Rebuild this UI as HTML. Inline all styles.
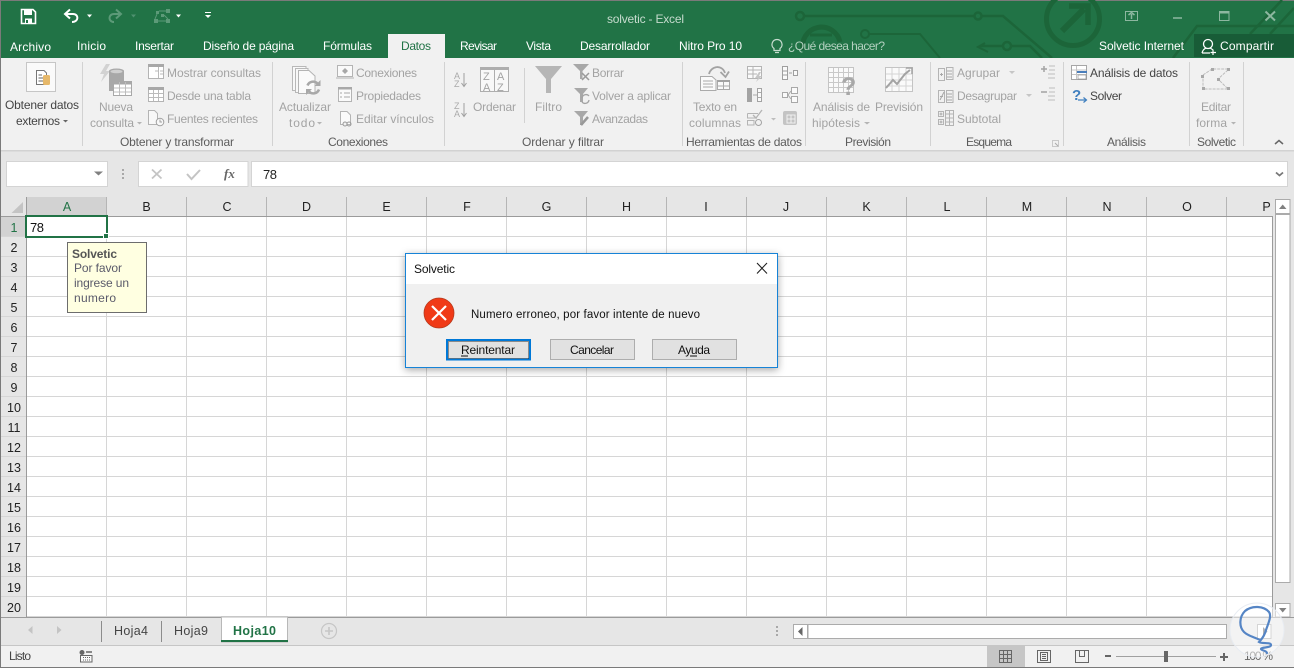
<!DOCTYPE html>
<html><head><meta charset="utf-8"><title>solvetic - Excel</title>
<style>
html,body{margin:0;padding:0;background:#fff;overflow:hidden}
svg{display:block}
text{font-family:"Liberation Sans",Arial,sans-serif;font-size:12px}
.w{fill:#fff}.g{fill:#a3a3a3}.k{fill:#444}.l{fill:#5c5c5c}.n{fill:#222;font-size:12.5px;text-anchor:middle}
.s{fill:none;stroke:#b4b4b4;stroke-width:1}.f{fill:#b4b4b4}
</style></head><body>
<svg width="1294" height="668" viewBox="0 0 1294 668" xmlns="http://www.w3.org/2000/svg">
<defs>
<pattern id="gr" x="27" y="217" width="80" height="20" patternUnits="userSpaceOnUse"><rect x="79" y="0" width="1" height="20" fill="#d6d6d6"/><rect x="0" y="19" width="80" height="1" fill="#d6d6d6"/></pattern>
<pattern id="hd" x="27" y="197" width="80" height="20" patternUnits="userSpaceOnUse"><rect x="79" y="0" width="1" height="20" fill="#b5b5b5"/></pattern>
<filter id="sh" x="-10%" y="-20%" width="120%" height="140%"><feDropShadow dx="0" dy="2" stdDeviation="4" flood-color="#000" flood-opacity=".35"/></filter>
</defs>

<!-- base -->
<rect width="1294" height="668" fill="#e6e6e6"/>
<rect x="0" y="0" width="1294" height="58" fill="#217346"/>
<rect x="0" y="0" width="1294" height="1" fill="#7a7a7a"/>
<rect x="0" y="0" width="1" height="668" fill="#7a7a7a"/>

<!-- circuit background -->
<g fill="none" stroke="#1c6539" stroke-width="2.5">
<circle cx="1073" cy="19" r="26.5" stroke-width="5"/>
<path d="M1062 31L1084 9" stroke-width="6"/><path d="M1069 6H1088V25" stroke-width="5.500"/>
<path d="M804 16H974M982 16H1003L1052 58"/>
<circle cx="800" cy="16" r="4"/><circle cx="978" cy="16" r="3.500"/><circle cx="865" cy="34" r="4" stroke-width="2"/>
<path d="M869 34H920L940 58" stroke-width="2"/>
<path d="M803 50A18 18 0 0 1 840 42" stroke-width="5"/><path d="M810 35H832" stroke-width="3"/>
<path d="M980 46H1003M1011 46H1030L1042 58"/><circle cx="1007" cy="46" r="4"/>
<path d="M985 43L978 47L988 52" stroke-width="2"/>
<path d="M1173 58L1197 26H1294" stroke-width="2.500"/>
<path d="M1250 34L1282 0M1270 34L1294 8" stroke-width="2.500"/>
</g>

<!-- QAT -->
<g>
<path d="M21.500 9.500H33L35.500 12V23.500H21.500Z" fill="none" stroke="#fff" stroke-width="1.600"/>
<rect x="24" y="10" width="8" height="5" fill="#fff"/><rect x="25" y="18.500" width="7" height="5" fill="#fff"/><rect x="26" y="20" width="2" height="3" fill="#217346"/>
<path d="M66 14H73C79 14 79 22 72 22" fill="none" stroke="#fff" stroke-width="2"/><path d="M70 9.500L65 14L70 18.500" fill="none" stroke="#fff" stroke-width="2"/>
<path d="M87 14.500H92L89.500 17.500Z" fill="#fff"/>
<path d="M120 14H114C108 14 108 22 114 22" fill="none" stroke="#5c9a78" stroke-width="2"/><path d="M116 9.500L121 14L116 18.500" fill="none" stroke="#5c9a78" stroke-width="2"/>
<path d="M131 14.500H136L133.500 17.500Z" fill="#4f9170"/>
<g fill="#5c9a78"><rect x="154" y="19" width="4" height="4"/><rect x="166" y="19" width="4" height="4"/><rect x="156" y="11" width="3" height="3"/><rect x="166" y="9" width="4" height="4"/><rect x="161" y="14" width="3" height="3"/></g>
<path d="M157 14L155 19M159 11H166M164 15L168 19M158 21H166" stroke="#5c9a78" fill="none"/>
<path d="M176 14.500H181L178.500 17.500Z" fill="#fff"/>
<rect x="205" y="12" width="6" height="1" fill="#fff"/><path d="M205 15H211L208 18Z" fill="#fff"/>
</g>
<text x="607" y="23" textLength="77" style="fill:#c6dbce">solvetic - Excel</text>
<!-- window buttons -->
<g fill="none" stroke="#8db7a0">
<rect x="1125.500" y="11.500" width="12" height="9"/><path d="M1131.500 19V14M1128.500 15L1131.500 12.500L1134.500 15" stroke-width="1.500"/>
<path d="M1173 18H1182" stroke-width="1.500"/>
<rect x="1219.500" y="11.500" width="9.500" height="9"/><path d="M1219.500 12.500H1229" stroke-width="2"/>
<path d="M1265.500 11.500L1275 20.500M1275 11.500L1265.500 20.500" stroke-width="2"/>
</g>

<!-- tabs -->
<rect x="388" y="34" width="57" height="25" fill="#f1f1f1"/>
<rect x="1194" y="34" width="100" height="23" fill="#185c37"/>
<text class="w" x="10" y="51" textLength="41">Archivo</text>
<text class="w" x="77" y="50" textLength="29">Inicio</text>
<text class="w" x="135" y="50" textLength="39">Insertar</text>
<text class="w" x="203" y="50" textLength="91">Diseño de página</text>
<text class="w" x="323" y="50" textLength="49">Fórmulas</text>
<text x="401" y="50" textLength="30" fill="#217346">Datos</text>
<text class="w" x="460" y="50" textLength="37">Revisar</text>
<text class="w" x="526" y="50" textLength="25">Vista</text>
<text class="w" x="580" y="50" textLength="70">Desarrollador</text>
<text class="w" x="679" y="50" textLength="63">Nitro Pro 10</text>
<path d="M777 40a5 5 0 0 1 3 9v2h-6v-2a5 5 0 0 1 3-9ZM775 53h4" fill="none" stroke="#c7dccf" stroke-width="1.200" transform="translate(0,-0.500)"/>
<text x="788" y="50" textLength="97" fill="#b3d0bf">¿Qué desea hacer?</text>
<text class="w" x="1099" y="50" textLength="85">Solvetic Internet</text>
<circle cx="1208" cy="44" r="4.500" fill="none" stroke="#fff" stroke-width="1.300"/>
<path d="M1202 53C1203 49 1205 48.500 1206 48M1210 48C1211 48.500 1212 49 1213 50M1202 53H1210M1213 49.500V55M1210.500 52.500H1216" fill="none" stroke="#fff" stroke-width="1.200"/>
<text class="w" x="1220" y="50" textLength="54">Compartir</text>

<!-- ribbon -->
<rect x="1" y="58" width="1293" height="92" fill="#f1f1f1"/>
<rect x="388" y="57" width="57" height="2" fill="#f1f1f1"/>
<rect x="1" y="150" width="1293" height="1.500" fill="#d2d2d2"/>
<g fill="#d2d2d2">
<rect x="82" y="62" width="1" height="84"/><rect x="272" y="62" width="1" height="84"/><rect x="444" y="62" width="1" height="84"/><rect x="524" y="68" width="1" height="55"/><rect x="682" y="62" width="1" height="84"/><rect x="805" y="62" width="1" height="84"/><rect x="930" y="62" width="1" height="84"/><rect x="1063" y="62" width="1" height="84"/><rect x="1189" y="62" width="1" height="84"/><rect x="1243" y="62" width="1" height="84"/>
</g>

<!-- Obtener datos -->
<rect x="26.500" y="62.500" width="29" height="29" fill="#fafafa" stroke="#c6c6c6"/>
<path d="M36.500 70.500H44L46.500 73V84.500H36.500Z" fill="#fff" stroke="#777"/>
<path d="M38.500 75H42M38.500 78H43M38.500 81H43" stroke="#666"/>
<rect x="43" y="75" width="7" height="10" rx="1.500" fill="#e6b86a"/>
<text class="k" x="5" y="109" textLength="74">Obtener datos</text>
<text class="k" x="16" y="125" textLength="44">externos</text>
<path d="M63 120H68L65.500 122.500Z" fill="#666"/>

<!-- Nueva consulta -->
<path d="M106 64L100 74H104L101 82L110 71H106L110 64Z" fill="#d2d2d2"/>
<ellipse cx="116.500" cy="71" rx="7.500" ry="2.500" fill="#a8a8a8"/><rect x="109" y="71" width="15" height="20" fill="#a8a8a8"/><ellipse cx="116.500" cy="71.500" rx="6" ry="1.800" fill="#d0d0d0"/>
<rect x="113.500" y="81.500" width="18" height="14" fill="#fff" stroke="#a8a8a8"/><rect x="113.500" y="81.500" width="18" height="3" fill="#a8a8a8"/>
<path d="M119.500 82V95M125.500 82V95M114 88H131M114 92H131" stroke="#bdbdbd"/>
<text class="g" x="99" y="111" textLength="34">Nueva</text>
<text class="g" x="90" y="127" textLength="44">consulta</text>
<path d="M137 122H142L139.500 124.500Z" class="f"/>

<!-- Mostrar etc -->
<rect x="148.500" y="64.500" width="15" height="14" fill="#fff" stroke="#b4b4b4"/><rect x="148" y="64" width="16" height="3" fill="#a8a8a8"/><path d="M158.500 67V78M155 71H158M160 71H163M160 74H163" stroke="#bbb"/>
<text class="g" x="167" y="77" textLength="94">Mostrar consultas</text>
<rect x="148.500" y="87.500" width="15" height="14" fill="#fff" stroke="#b4b4b4"/><rect x="148" y="87" width="16" height="3" fill="#a8a8a8"/><path d="M153.500 90V101M158.500 90V101M149 93.500H163M149 97.500H163" stroke="#bbb"/>
<text class="g" x="167" y="100" textLength="84">Desde una tabla</text>
<path d="M148.500 110.500H154.500L157.500 113.500V124.500H148.500Z" fill="#f8f8f8" stroke="#b4b4b4"/><circle cx="160" cy="122" r="3.800" fill="#f8f8f8" stroke="#a0a0a0"/><path d="M160 119.500V122H162" stroke="#a0a0a0" fill="none"/>
<text class="g" x="167" y="123" textLength="91">Fuentes recientes</text>

<!-- Actualizar -->
<path d="M292.500 66.500H306V90.500H292.500Z" fill="#f8f8f8" stroke="#b8b8b8"/>
<path d="M295.500 68.500H308V92.500H295.500Z" fill="#f8f8f8" stroke="#b8b8b8"/>
<path d="M298.500 70.500H309L315 76V93.500H298.500Z" fill="#fafafa" stroke="#b4b4b4"/>
<path d="M307.500 85.500A6 6 0 0 1 317.500 83.500" fill="none" stroke="#a8a8a8" stroke-width="2.500"/>
<path d="M319 89.500A6 6 0 0 1 309 91.500" fill="none" stroke="#a8a8a8" stroke-width="2.500"/>
<path d="M320.500 80V86H314.500Z" fill="#a8a8a8"/><path d="M306 95V89H312Z" fill="#a8a8a8"/>
<text class="g" x="279" y="111" textLength="52">Actualizar</text>
<text class="g" x="289" y="127" textLength="26">todo</text>
<path d="M317 122H322L319.500 124.500Z" class="f"/>
<rect x="337.500" y="65.500" width="15" height="11" fill="#fafafa" stroke="#b4b4b4"/><path d="M345 68L348 71L345 74L342 71Z" fill="#a8a8a8"/><path d="M336 78H354" stroke="#b4b4b4"/>
<text class="g" x="356" y="77" textLength="61">Conexiones</text>
<rect x="338.500" y="87.500" width="13" height="14" fill="#fafafa" stroke="#b4b4b4"/><rect x="338" y="87" width="14" height="2.500" fill="#a8a8a8"/><path d="M340 93H342M344 93H350M340 97H342M344 97H350" stroke="#a8a8a8"/>
<text class="g" x="356" y="100" textLength="65">Propiedades</text>
<path d="M340.500 111.500H347L350.500 115V124.500H340.500Z" fill="#fafafa" stroke="#b4b4b4"/><circle cx="345" cy="124" r="2" fill="#f1f1f1" stroke="#999"/><circle cx="349" cy="124" r="2" fill="none" stroke="#999"/>
<text class="g" x="356" y="123" textLength="78">Editar vínculos</text>
<text class="l" x="120" y="146" textLength="114">Obtener y transformar</text>
<text class="l" x="328" y="146" textLength="60">Conexiones</text>

<!-- sort -->
<text x="454" y="79" style="font-size:9px;fill:#aaa">A</text><text x="454" y="87" style="font-size:9px;fill:#aaa">Z</text>
<path d="M464 73V86M461.500 83L464 86.500L466.500 83" fill="none" stroke="#a0a0a0"/>
<text x="454" y="109" style="font-size:9px;fill:#aaa">Z</text><text x="454" y="117" style="font-size:9px;fill:#aaa">A</text>
<path d="M464 103V116M461.500 113L464 116.500L466.500 113" fill="none" stroke="#a0a0a0"/>
<rect x="480.500" y="67.500" width="28" height="24" fill="#f8f8f8" stroke="#aeaeae"/><rect x="480" y="67" width="29" height="3" fill="#aeaeae"/><path d="M494.500 70V91" stroke="#aeaeae"/>
<text x="483" y="80" style="font-size:11px;fill:#a3a3a3">Z</text><text x="497" y="80" style="font-size:11px;fill:#a3a3a3">A</text><text x="483" y="91" style="font-size:11px;fill:#a3a3a3">A</text><text x="497" y="91" style="font-size:11px;fill:#a3a3a3">Z</text>
<text class="g" x="473" y="111" textLength="43">Ordenar</text>

<!-- filter -->
<path d="M535 66H562L551 79V93H546V79Z" fill="#b6b6b6"/>
<text class="g" x="535" y="111" textLength="27">Filtro</text>
<path d="M573 64H589L582.500 71V79H580V71Z" fill="#a8a8a8"/><path d="M582 73L589 80M589 73L582 80" stroke="#9a9a9a" stroke-width="1.500"/>
<text class="g" x="592" y="77" textLength="32">Borrar</text>
<path d="M574 88H588L583 94V102H580V94Z" fill="#a8a8a8"/><path d="M582 98A4 4 0 0 1 589 96M589 100A4 4 0 0 1 582 102" fill="none" stroke="#a3a3a3" stroke-width="1.300"/>
<text class="g" x="592" y="100" textLength="79">Volver a aplicar</text>
<path d="M574 111H588L583 117V125H580V117Z" fill="#a8a8a8"/><path d="M581 125L588 117" stroke="#999" stroke-width="2.500"/>
<text class="g" x="592" y="123" textLength="56">Avanzadas</text>
<text class="l" x="522" y="146" textLength="82">Ordenar y filtrar</text>

<!-- texto en columnas -->
<path d="M700.500 76.500H712L716 80V90.500H700.500Z" fill="#fafafa" stroke="#aaa"/><path d="M703 81H713M703 84H713M703 87H713" stroke="#aaa"/>
<rect x="717.500" y="80.500" width="12" height="9" fill="#fafafa" stroke="#aaa"/><rect x="717" y="80" width="13" height="2" fill="#a3a3a3"/><path d="M723.500 82V90M718 86H729" stroke="#aaa"/>
<path d="M709 74C711 66 722 64 725 73" fill="none" stroke="#a3a3a3" stroke-width="1.800"/><path d="M720.500 72L725.500 77L729 71.500" fill="none" stroke="#a3a3a3" stroke-width="1.800"/>
<text class="g" x="693" y="111" textLength="44">Texto en</text>
<text class="g" x="689" y="127" textLength="52">columnas</text>
<rect x="747.500" y="66.500" width="14" height="12" fill="#fafafa" stroke="#b4b4b4"/><path d="M748 70H761M748 74H757M753 67V78" stroke="#b4b4b4"/><path d="M759 72L755 78H758L756 82L762 76H759L761 72Z" fill="#c6c6c6"/>
<rect x="747" y="88" width="5" height="14" fill="#a3a3a3"/><rect x="757.500" y="88.500" width="4" height="13" fill="#fafafa" stroke="#a3a3a3"/><path d="M753 95H757" stroke="#aaa"/><path d="M757.500 92.500H761M757.500 97.500H761" stroke="#aaa"/>
<path d="M747.500 113.500H758M747.500 113.500V118H757M747.500 120.500H754V125H747.500Z" fill="none" stroke="#b4b4b4"/><path d="M753 115L756 118L762 110" fill="none" stroke="#b4b4b4" stroke-width="1.300"/><circle cx="758.500" cy="122.500" r="3" fill="none" stroke="#a3a3a3"/>
<path d="M771 118H776L773.500 120.500Z" fill="#bdbdbd"/>
<rect x="782.500" y="66.500" width="5" height="13" fill="#fafafa" stroke="#9f9f9f"/><path d="M783 71H787M783 75H787M789 73H792" stroke="#9f9f9f"/><rect x="793.500" y="70.500" width="4" height="5" fill="#fafafa" stroke="#9f9f9f"/>
<rect x="782.500" y="92.500" width="5" height="5" fill="#fafafa" stroke="#a8a8a8"/><rect x="791.500" y="87.500" width="6" height="6" fill="#fafafa" stroke="#a8a8a8"/><rect x="791.500" y="96.500" width="6" height="6" fill="#fafafa" stroke="#a8a8a8"/><path d="M788 95L791 91M788 95L791 99" stroke="#a8a8a8"/>
<rect x="783" y="111" width="14" height="14" rx="2" fill="#c4c4c4"/><path d="M787 115H795V123H787ZM791 115V123M787 119H795" fill="none" stroke="#f1f1f1"/>
<text class="l" x="686" y="146" textLength="116">Herramientas de datos</text>

<!-- analisis hipotesis -->
<rect x="828.500" y="67.500" width="25" height="25" fill="#fafafa" stroke="#c4c4c4"/><path d="M833.500 68V92M838.500 68V92M843.500 68V92M848.500 68V92M829 72.500H853M829 77.500H853M829 82.500H853M829 87.500H853" stroke="#c9c9c9"/>
<text x="841" y="95" style="font-size:25px;font-weight:bold;fill:#a8a8a8">?</text>
<text class="g" x="813" y="111" textLength="57">Análisis de</text>
<text class="g" x="812" y="127" textLength="48">hipótesis</text>
<path d="M864 122H870L867 124.500Z" class="f"/>
<rect x="885.500" y="67.500" width="27" height="24" fill="#fafafa" stroke="#c4c4c4"/><path d="M892 68V91M899 68V91M906 68V91M886 74H912M886 80H912M886 86H912" stroke="#d4d4d4"/>
<path d="M886 88L893 80L897 84L905 74L910 70" fill="none" stroke="#a3a3a3" stroke-width="2"/><path d="M906 68H912V74" fill="none" stroke="#a3a3a3" stroke-width="1.500"/>
<text class="g" x="875" y="111" textLength="48">Previsión</text>
<text class="l" x="845" y="146" textLength="46">Previsión</text>

<!-- esquema -->
<rect x="938.500" y="68.500" width="6" height="12" class="s"/><rect x="946.500" y="67.500" width="6.500" height="12" class="s"/><path d="M940 74.500H943M941.500 73V76M947 71H952M947 74H952M947 77H952" stroke="#a8a8a8"/>
<text class="g" x="957" y="77" textLength="43">Agrupar</text><path d="M1009 71H1015L1012 74Z" fill="#c6c6c6"/>
<rect x="938.500" y="90.500" width="6" height="12" class="s"/><rect x="946.500" y="90.500" width="6.500" height="12" class="s"/><path d="M940 96.500H943M947 94H952M947 97H952M947 100H952M940 100L944 92" stroke="#a8a8a8"/>
<text class="g" x="957" y="100" textLength="60">Desagrupar</text><path d="M1026 94H1032L1029 97Z" fill="#c6c6c6"/>
<rect x="938.500" y="111.500" width="5" height="5" class="s"/><rect x="938.500" y="119.500" width="5" height="5" class="s"/><rect x="945.500" y="110.500" width="8" height="15" class="s"/><path d="M949.500 111V125M946 114H953M946 118H953M946 122H953" stroke="#b4b4b4"/><path d="M939.500 114H942.500M941 112.500V115.500M939.500 122H942.500M941 120.500V123.500" stroke="#a8a8a8"/>
<text class="g" x="957" y="123" textLength="44">Subtotal</text>
<path d="M1041 69H1047M1044 66V72" stroke="#a3a3a3" stroke-width="1.500"/><path d="M1049 66H1055M1049 70H1055M1048 74H1055M1048 78H1055" stroke="#bdbdbd"/>
<path d="M1041 92H1047" stroke="#a3a3a3" stroke-width="1.500"/><path d="M1049 88H1055M1049 92H1055M1048 96H1055M1048 100H1055" stroke="#bdbdbd"/>
<text class="l" x="966" y="146" textLength="46">Esquema</text>
<path d="M1052.500 140.500H1058.500V146.500H1052.500Z" fill="none" stroke="#c8c8c8"/><path d="M1055 143L1058 146" stroke="#aaa"/>

<!-- analisis -->
<rect x="1071.500" y="65.500" width="15" height="14" fill="#fff" stroke="#a6a6a6"/><path d="M1076.500 66V79M1072 70H1086M1072 74.500H1086" stroke="#c4c4c4"/><rect x="1077" y="71" width="10" height="2" fill="#4a7ebb"/><rect x="1078" y="75" width="8" height="4" fill="#fff" stroke="#888" stroke-width=".6"/>
<text class="k" x="1090" y="77" textLength="88">Análisis de datos</text>
<text x="1072" y="100" style="font-size:15px;font-weight:bold;fill:#3f7fbf">?</text>
<path d="M1078 100H1086M1083.500 97.500L1086.500 100L1083.500 102.500" fill="none" stroke="#3f7fbf" stroke-width="1.200"/>
<text class="k" x="1090" y="100" textLength="32">Solver</text>
<text class="l" x="1107" y="146" textLength="39">Análisis</text>

<!-- editar forma -->
<path d="M1203 75L1212 69H1228M1228 70L1218 79L1228 89H1203V76" fill="none" stroke="#bdbdbd" stroke-dasharray="3 1"/>
<g fill="#a8a8a8"><rect x="1201" y="75" width="3" height="3"/><rect x="1211" y="68" width="3" height="3"/><rect x="1227" y="68" width="3" height="3"/><rect x="1217" y="78" width="3" height="3"/><rect x="1227" y="87" width="3" height="3"/><rect x="1202" y="87" width="3" height="3"/></g>
<text class="g" x="1201" y="111" textLength="30">Editar</text>
<text class="g" x="1196" y="127" textLength="31">forma</text>
<path d="M1231 122H1236L1233.500 124.500Z" class="f"/>
<text class="l" x="1197" y="146" textLength="39">Solvetic</text>
<path d="M1275 144L1279 140.500L1283 144" fill="none" stroke="#666" stroke-width="1.500"/>

<!-- formula bar -->
<rect x="6.500" y="161.500" width="101" height="25" fill="#fff" stroke="#d4d4d4"/>
<path d="M94 171.500H103L98.500 175.500Z" fill="#808080"/>
<g fill="#a8a8a8"><rect x="122" y="169" width="2" height="2"/><rect x="122" y="173" width="2" height="2"/><rect x="122" y="177" width="2" height="2"/></g>
<rect x="138.500" y="161.500" width="109.500" height="25" fill="#fff" stroke="#d4d4d4"/>
<path d="M152 169.500L161.500 178.500M161.500 169.500L152 178.500" stroke="#c4c4c4" stroke-width="1.800"/>
<path d="M187 174L191.500 179L200 170" fill="none" stroke="#c4c4c4" stroke-width="2"/>
<text x="224" y="178" style="font-family:'Liberation Serif',serif;font-style:italic;font-weight:bold;font-size:13px;fill:#666">fx</text>
<rect x="251.500" y="161.500" width="1036" height="25" fill="#fff" stroke="#d4d4d4"/>
<text x="263" y="179" textLength="14" style="font-size:13px;fill:#222">78</text>
<path d="M1276 172.500L1279.500 175.500L1283 172.500" fill="none" stroke="#777" stroke-width="1.800"/>

<!-- headers -->
<rect x="1" y="197" width="1272" height="20" fill="#e6e6e6"/>
<rect x="27" y="197" width="80" height="19" fill="#d2d2d2"/>
<rect x="27" y="197" width="1246" height="19" fill="url(#hd)"/>
<path d="M23 202V213H11.500Z" fill="#c4c4c4"/>
<rect x="1" y="216" width="1272" height="1" fill="#9b9b9b"/>
<rect x="1" y="217" width="26" height="400" fill="#e6e6e6"/>
<rect x="1" y="217" width="25" height="20" fill="#d2d2d2"/>

<!-- grid -->
<rect x="27" y="217" width="1245" height="400" fill="#fff"/>
<rect x="27" y="217" width="1245" height="400" fill="url(#gr)"/>
<rect x="26" y="197" width="1" height="420" fill="#9b9b9b"/>
<rect x="1272" y="216" width="1" height="401" fill="#9b9b9b"/>
<g fill="#d6d6d6"><rect x="1" y="236" width="25" height="1"/><rect x="1" y="256" width="25" height="1"/><rect x="1" y="276" width="25" height="1"/><rect x="1" y="296" width="25" height="1"/><rect x="1" y="316" width="25" height="1"/><rect x="1" y="336" width="25" height="1"/><rect x="1" y="356" width="25" height="1"/><rect x="1" y="376" width="25" height="1"/><rect x="1" y="396" width="25" height="1"/><rect x="1" y="416" width="25" height="1"/><rect x="1" y="436" width="25" height="1"/><rect x="1" y="456" width="25" height="1"/><rect x="1" y="476" width="25" height="1"/><rect x="1" y="496" width="25" height="1"/><rect x="1" y="516" width="25" height="1"/><rect x="1" y="536" width="25" height="1"/><rect x="1" y="556" width="25" height="1"/><rect x="1" y="576" width="25" height="1"/><rect x="1" y="596" width="25" height="1"/></g>

<text class="n" x="67" y="211" style="fill:#217346">A</text>
<text class="n" x="146.500" y="211">B</text><text class="n" x="227" y="211">C</text><text class="n" x="306.500" y="211">D</text><text class="n" x="386.500" y="211">E</text><text class="n" x="467" y="211">F</text><text class="n" x="546.500" y="211">G</text><text class="n" x="626.500" y="211">H</text><text class="n" x="706" y="211">I</text><text class="n" x="786" y="211">J</text><text class="n" x="866.500" y="211">K</text><text class="n" x="947" y="211">L</text><text class="n" x="1027" y="211">M</text><text class="n" x="1107" y="211">N</text><text class="n" x="1187" y="211">O</text><text class="n" x="1266.500" y="211">P</text>

<text class="n" x="14" y="232" style="fill:#217346">1</text>
<text class="n" x="14" y="252">2</text><text class="n" x="14" y="272">3</text><text class="n" x="14" y="292">4</text><text class="n" x="14" y="312">5</text><text class="n" x="14" y="332">6</text><text class="n" x="14" y="352">7</text><text class="n" x="14" y="372">8</text><text class="n" x="14" y="392">9</text><text class="n" x="14" y="412">10</text><text class="n" x="14" y="432">11</text><text class="n" x="14" y="452">12</text><text class="n" x="14" y="472">13</text><text class="n" x="14" y="492">14</text><text class="n" x="14" y="512">15</text><text class="n" x="14" y="532">16</text><text class="n" x="14" y="552">17</text><text class="n" x="14" y="572">18</text><text class="n" x="14" y="592">19</text><text class="n" x="14" y="612">20</text>

<!-- selected cell -->
<rect x="26" y="216" width="81" height="21" fill="#fff" stroke="#217346" stroke-width="2"/>
<rect x="103.500" y="233.500" width="5" height="5" fill="#217346" stroke="#fff"/>
<text x="30" y="232" textLength="14" style="font-size:13px;fill:#111">78</text>

<!-- comment -->
<rect x="67.500" y="242.500" width="79" height="70" fill="#ffffe1" stroke="#6d6d6d"/>
<text x="72" y="258" textLength="45" style="font-weight:bold;fill:#555">Solvetic</text>
<text x="74" y="272" textLength="48" style="fill:#5a5a6a">Por favor</text>
<text x="74" y="287" textLength="55" style="fill:#5a5a6a">ingrese un</text>
<text x="74" y="302" textLength="42" style="fill:#5a5a6a">numero</text>

<!-- vertical scroll -->
<rect x="1273" y="197" width="21" height="420" fill="#e6e6e6"/>
<rect x="1275.500" y="199.500" width="14.500" height="14" fill="#fff" stroke="#ababab"/>
<path d="M1279 209H1286.500L1282.700 204.500Z" fill="#808080"/>
<rect x="1275.500" y="214.500" width="14.500" height="368" fill="#fff" stroke="#ababab"/>
<rect x="1275.500" y="603.500" width="14.500" height="13.500" fill="#fff" stroke="#ababab"/>
<path d="M1279 608H1286.500L1282.700 612.500Z" fill="#808080"/>

<!-- tabs bar -->
<rect x="1" y="617" width="1293" height="28" fill="#e6e6e6"/>
<rect x="1" y="617" width="1293" height="1" fill="#9b9b9b"/>
<path d="M32.500 626V634L28 630Z" fill="#c4c4c4"/><path d="M57 626V634L61.500 630Z" fill="#c4c4c4"/>
<rect x="101" y="621" width="1" height="21" fill="#8c8c8c"/><rect x="161" y="621" width="1" height="21" fill="#8c8c8c"/>
<text x="114" y="635" textLength="34" style="fill:#444;font-size:12.500px">Hoja4</text>
<text x="174" y="635" textLength="34" style="fill:#444;font-size:12.500px">Hoja9</text>
<rect x="221.500" y="617" width="66" height="25" fill="#fff" stroke="#b8b8b8"/>
<rect x="221" y="640" width="67" height="2" fill="#217346"/>
<text x="233" y="635" textLength="43" style="fill:#217346;font-weight:bold;font-size:12.500px">Hoja10</text>
<circle cx="329" cy="631" r="7.500" fill="none" stroke="#c6c6c6" stroke-width="1.200"/><path d="M325 631H333M329 627V635" stroke="#c6c6c6" stroke-width="1.600"/>
<g fill="#a8a8a8"><rect x="776" y="626" width="2" height="2"/><rect x="776" y="630" width="2" height="2"/><rect x="776" y="634" width="2" height="2"/></g>
<rect x="793.500" y="624.500" width="433" height="14" fill="#fff" stroke="#ababab"/>
<rect x="807" y="625" width="1.500" height="13" fill="#ababab"/>
<path d="M802.500 627V636L798 631.500Z" fill="#666"/>
<rect x="1257.500" y="624.500" width="13.500" height="14" fill="#fff" stroke="#ababab"/><path d="M1263 627V636L1267.500 631.500Z" fill="#666"/>

<!-- status bar -->
<rect x="1" y="645" width="1293" height="22" fill="#f1f1f1"/>
<rect x="1" y="645" width="1293" height="1" fill="#c6c6c6"/>
<rect x="0" y="667" width="1294" height="1" fill="#7a7a7a"/>
<text x="9" y="660" textLength="22" style="fill:#444">Listo</text>
<circle cx="82" cy="652.500" r="2.500" fill="#666"/><path d="M86 652H92" stroke="#666" stroke-width="1.500"/><rect x="80.500" y="655.500" width="11.500" height="6.500" fill="#fafafa" stroke="#666"/><path d="M83 657.500H90M83 660H90" stroke="#666" stroke-dasharray="1 1"/>
<rect x="987" y="646" width="38" height="21" fill="#c6c6c6"/>
<rect x="999.500" y="650.500" width="12" height="12" fill="none" stroke="#666"/><path d="M1003.500 651V662M1007.500 651V662M1000 654.500H1011M1000 658.500H1011" stroke="#666"/>
<rect x="1037.500" y="650.500" width="13" height="12" fill="none" stroke="#666"/><rect x="1040.500" y="652.500" width="7" height="8" fill="none" stroke="#666"/><path d="M1042 654.500H1046M1042 656.500H1046M1042 658.500H1046" stroke="#666"/>
<path d="M1075.500 650.500H1088.500V662.500H1075.500ZM1079.500 651V656.500H1084.500V651" fill="none" stroke="#666"/>
<rect x="1105" y="655" width="6" height="2" fill="#666"/>
<rect x="1116" y="656" width="100" height="1" fill="#a0a0a0"/>
<rect x="1164" y="651" width="4" height="11" fill="#666"/>
<path d="M1220 657H1228M1224 653V661" stroke="#666" stroke-width="2"/>
<text x="1244" y="660" textLength="29" style="fill:#666">100 %</text>

<!-- watermark -->
<circle cx="1257" cy="630" r="27" fill="#fff" fill-opacity=".5" stroke="#e8ecf2"/>
<path d="M1260 640C1254 637 1248 636 1244 632C1239 627 1239 617 1245 611C1252 605 1264 606 1269 612C1272 616 1268 624 1266 630C1265 634 1263 638 1259 642C1262 644 1271 642 1271 645C1271 648 1261 647 1261 649C1262 651 1266 650 1267 653" fill="none" stroke="#5585c5" stroke-width="2.200" stroke-linecap="round"/>

<!-- dialog -->
<rect x="405.500" y="253.500" width="372" height="114" fill="#f0f0f0" stroke="#1883d7" filter="url(#sh)"/>
<rect x="406" y="254" width="371" height="30" fill="#fff"/>
<text x="414" y="273" textLength="41" style="fill:#111">Solvetic</text>
<path d="M757 263L767 273.500M767 263L757 273.500" stroke="#222" stroke-width="1.100"/>
<circle cx="439" cy="313" r="15" fill="#f03a17" stroke="#b5391c" stroke-width=".8"/>
<path d="M432 306L446 320M446 306L432 320" stroke="#fff" stroke-width="2.200"/>
<text x="471" y="318" textLength="229" style="font-size:11.500px;fill:#111">Numero erroneo, por favor intente de nuevo</text>
<rect x="447" y="340" width="83" height="19.500" fill="#e1e1e1" stroke="#0078d7" stroke-width="2"/>
<rect x="448.500" y="341.500" width="80" height="17" fill="none" stroke="#333" stroke-dasharray="1 1"/>
<text x="461" y="354" textLength="54" style="fill:#111">Reintentar</text><path d="M461 356H468" stroke="#111"/>
<rect x="550.500" y="339.500" width="84" height="20" fill="#e1e1e1" stroke="#adadad"/>
<text x="570" y="354" textLength="44" style="fill:#111">Cancelar</text>
<rect x="652.500" y="339.500" width="84" height="20" fill="#e1e1e1" stroke="#adadad"/>
<text x="678" y="354" textLength="32" style="fill:#111">Ayuda</text><path d="M690 356H697" stroke="#111"/>
</svg>
</body></html>
